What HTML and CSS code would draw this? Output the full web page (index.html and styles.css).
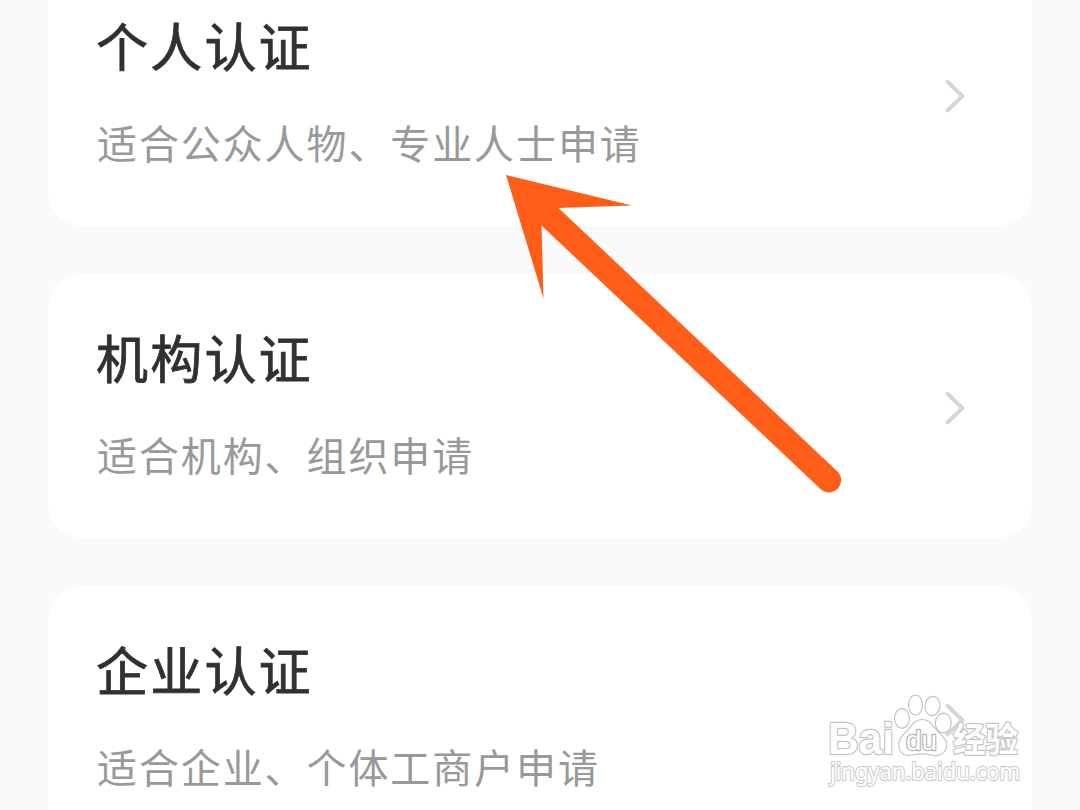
FILE: index.html
```html
<!DOCTYPE html>
<html lang="zh-CN">
<head>
<meta charset="utf-8">
<title>认证</title>
<link rel="stylesheet" href="styles.css">
</head>
<body>
<main class="page">
  <section class="card">
    <div class="card-text">
      <h2 class="title">个人认证</h2>
      <p class="desc">适合公众人物、专业人士申请</p>
    </div>
    <svg class="chevron" viewBox="0 0 22 36"><path d="M2.500 3.800 17.500 18.300 2.500 32.300"/></svg>
  </section>
  <section class="card">
    <div class="card-text">
      <h2 class="title">机构认证</h2>
      <p class="desc">适合机构、组织申请</p>
    </div>
    <svg class="chevron" viewBox="0 0 22 36"><path d="M2.500 3.800 17.500 18.300 2.500 32.300"/></svg>
  </section>
  <section class="card">
    <div class="card-text">
      <h2 class="title">企业认证</h2>
      <p class="desc">适合企业、个体工商户申请</p>
    </div>
    <svg class="chevron" viewBox="0 0 22 36"><path d="M2.500 3.800 17.500 18.300 2.500 32.300"/></svg>
  </section>

  <svg class="arrow" viewBox="0 0 340 320">
    <path d="M0 0 126 30.500 52.500 33 332.500 297.500A12.300 12.300 0 0 1 315.500 315L35.500 50.500 37.500 123.500Z"/>
  </svg>

  <svg class="watermark" viewBox="0 0 230 125">
    <text class="mark-latin" x="18" y="74" textLength="66" lengthAdjust="spacingAndGlyphs">Bai</text>
    <g class="paw">
      <ellipse cx="92" cy="38.500" rx="7.500" ry="9.800"/>
      <ellipse cx="105.500" cy="25" rx="7" ry="10"/>
      <ellipse cx="122.500" cy="26" rx="7.500" ry="9.700" transform="rotate(8 122.500 26)"/>
      <ellipse cx="133.300" cy="43" rx="8" ry="9.800"/>
      <path d="M112 39.500C104 39.500 101 47 96.500 51.500C91 56.500 88 60.500 89 67C90 74 96 76.500 102 75C109 73.500 115 73.500 121 75C128 77 135 74.500 136.500 67C138 60 132 56 127.500 51C122.500 46 120 39.500 112 39.500Z"/>
    </g>
    <text class="mark-du" x="96" y="70" textLength="31" lengthAdjust="spacingAndGlyphs">du</text>
    <text class="mark-cjk" x="143" y="72" textLength="65" lengthAdjust="spacingAndGlyphs">经验</text>
    <text class="mark-url" x="20" y="100" textLength="190" lengthAdjust="spacingAndGlyphs">jingyan.baidu.com</text>
  </svg>
</main>
</body>
</html>
```
FILE: styles.css
```css
* { box-sizing: border-box; }

body {
  margin: 0;
  background: #fafafa;
  font-family: "Noto Sans CJK SC", sans-serif;
}

.page {
  position: relative;
  width: 1080px;
  height: 810px;
  overflow: hidden;
  display: flex;
  flex-direction: column;
  gap: 48px;
  padding: 0 48px;
}

.card {
  flex: none;
  height: 264px;
  display: flex;
  align-items: flex-start;
  justify-content: space-between;
  padding: 43px 65px 0 48px;
  border-radius: 34px;
  background: #fff;
}

.card:first-child { margin-top: -38px; }

.card-text {
  display: flex;
  flex-direction: column;
  gap: 27px;
}

.title {
  margin: 0;
  font-size: 52px;
  line-height: 80px;
  font-weight: 400;
  letter-spacing: 2.200px;
  color: #303030;
  -webkit-text-stroke: 0.8px #303030;
}

.desc {
  margin: 0 0 0 1px;
  font-size: 40px;
  line-height: 60px;
  font-weight: 400;
  letter-spacing: 1.900px;
  color: #999;
}

.chevron {
  width: 22px;
  height: 36px;
  margin-top: 73px;
  fill: none;
  stroke: #d6d6d6;
  stroke-width: 4;
  stroke-linecap: round;
  stroke-linejoin: round;
}

.arrow {
  position: absolute;
  left: 506px;
  top: 175px;
  width: 340px;
  height: 320px;
  fill: #ff5d18;
}

.watermark {
  position: absolute;
  left: 810px;
  top: 680px;
  width: 230px;
  height: 125px;
  fill: #fff;
  stroke: #c4c4c4;
  stroke-width: 1.200;
}

.watermark text {
  paint-order: stroke;
  stroke-width: 2.400;
  stroke-linejoin: round;
}

.mark-latin {
  font: 700 44px "Liberation Sans", sans-serif;
}

.watermark .mark-du {
  font: 400 27px "Liberation Sans", sans-serif;
  stroke: #b4b4b4;
}

.mark-cjk {
  font: 700 34px "Noto Sans CJK SC", sans-serif;
}

.watermark .mark-url {
  font: 400 23.500px "Noto Sans", sans-serif;
  stroke: #cfcfcf;
}
```
